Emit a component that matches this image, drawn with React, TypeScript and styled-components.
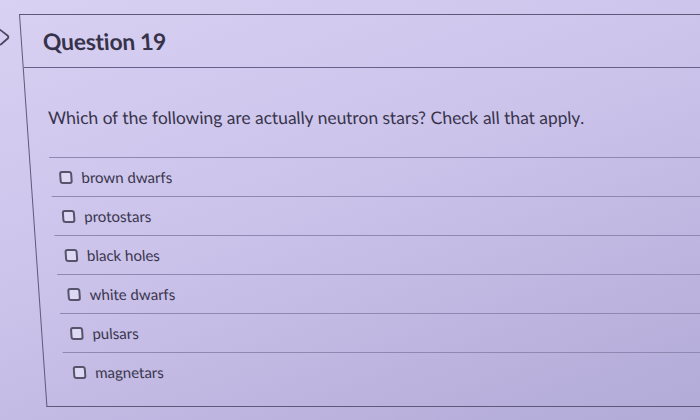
import { createGlobalStyle } from "styled-components";
import styled from "styled-components";

const GlobalStyle = createGlobalStyle`
  html, body {
    margin: 0;
    padding: 0;
    width: 700px;
    height: 420px;
    overflow: hidden;
    background: linear-gradient(160deg, #d8d1f3 0%, #cbc3ea 45%, #b2aad7 100%);
  }
  #root {
    height: 420px;
  }
`;

const Page = styled.div`
  display: flex;
  height: 420px;
  padding-top: 14px;
  box-sizing: border-box;
  font-family: Lato, "Open Sans", sans-serif;
  color: #38344c;
  transform: skewX(4deg);
  transform-origin: 0 0;
`;

const NavArrow = styled.div`
  width: 22px;
  flex: 0 0 22px;
  margin-left: -4px;
  padding-top: 13px;
  color: #4a4660;
`;

const Card = styled.section`
  flex: 1;
  min-width: 0;
  height: 393px;
  border: 1.5px solid #5e5979;
  border-right: none;
  box-sizing: border-box;
  display: flex;
  flex-direction: column;
`;

const Header = styled.header`
  height: 52px;
  flex: 0 0 52px;
  display: flex;
  align-items: center;
  padding-left: 21px;
  border-bottom: 1.5px solid #66618a;
`;

const Title = styled.h2`
  margin: 0;
  font-size: 22.8px;
  font-weight: 700;
  color: #36324a;
  letter-spacing: -0.2px;
`;

const Body = styled.div`
  padding-left: 21px;
`;

const Prompt = styled.p`
  margin: 38px 0 27px;
  font-size: 17.4px;
  line-height: 24px;
  color: #38344c;
`;

const AnswerList = styled.ul`
  list-style: none;
  margin: 0 0 0 -2px;
  padding: 0;
`;

const AnswerRow = styled.li`
  height: 39px;
  display: flex;
  align-items: center;
  gap: 9px;
  padding-left: 9px;
  border-top: 1px solid #8f89b2;
  box-sizing: border-box;
`;

const Checkbox = styled.span`
  width: 13px;
  height: 13px;
  border: 2px solid #57536b;
  border-radius: 3px;
  box-sizing: border-box;
  background: #ddd8f3;
`;

const AnswerLabel = styled.span`
  font-size: 15px;
  color: #3a364e;
`;

const answers = [
  "brown dwarfs",
  "protostars",
  "black holes",
  "white dwarfs",
  "pulsars",
  "magnetars",
];

export default function App() {
  return (
    <>
      <GlobalStyle />
      <Page>
        <NavArrow>
          <svg width="14" height="20" viewBox="0 0 14 20">
            <path
              d="M1 2 L9 8.5 Q10.5 10 9 11.5 L1 18"
              fill="none"
              stroke="currentColor"
              strokeWidth="1.8"
              strokeLinejoin="round"
            />
          </svg>
        </NavArrow>
        <Card>
          <Header>
            <Title>Question 19</Title>
          </Header>
          <Body>
            <Prompt>
              Which of the following are actually neutron stars? Check all that apply.
            </Prompt>
            <AnswerList>
              {answers.map((a) => (
                <AnswerRow key={a}>
                  <Checkbox />
                  <AnswerLabel>{a}</AnswerLabel>
                </AnswerRow>
              ))}
            </AnswerList>
          </Body>
        </Card>
      </Page>
    </>
  );
}
